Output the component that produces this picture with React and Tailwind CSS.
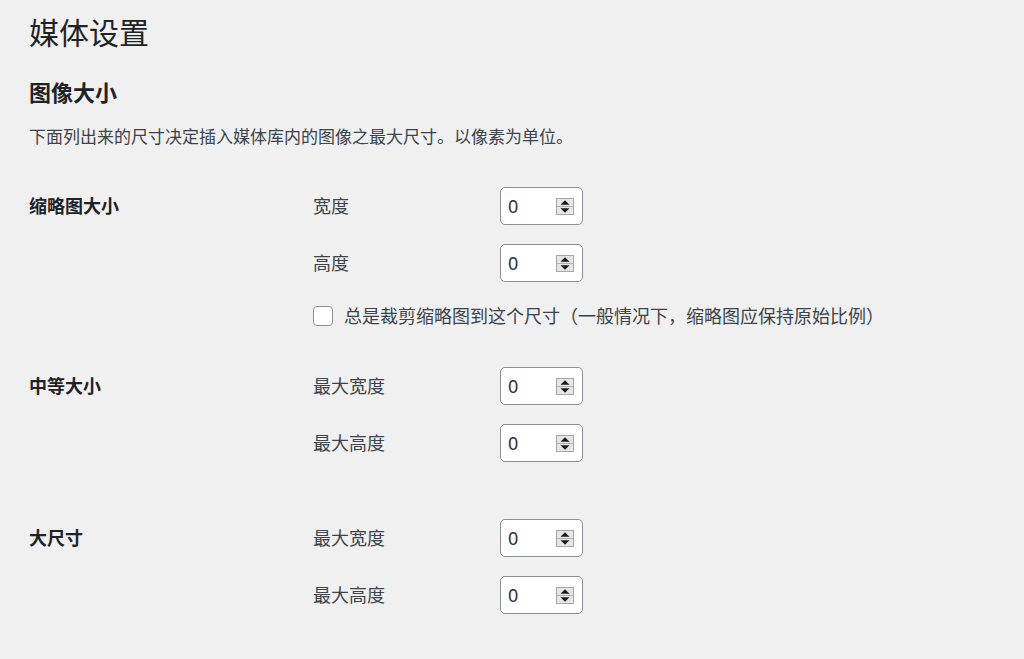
import React from "react";

const sections = [
  {
    title: "缩略图大小",
    rows: ["宽度", "高度"],
    crop: true,
    gap: "mt-0",
  },
  {
    title: "中等大小",
    rows: ["最大宽度", "最大高度"],
    gap: "mt-[41px]",
  },
  {
    title: "大尺寸",
    rows: ["最大宽度", "最大高度"],
    gap: "mt-[57px]",
  },
];

function Spinner() {
  return (
    <svg width="18" height="17" viewBox="0 0 18 17" className="shrink-0">
      <rect x="0.5" y="0.5" width="17" height="16" fill="#e6e6e6" stroke="#a6a6a6" />
      <line x1="1" y1="8.5" x2="17" y2="8.5" stroke="#b0b0b0" />
      <polygon points="9,2.3 13.5,6.8 4.5,6.8" fill="#1a1a1a" />
      <polygon points="4.5,10.2 13.5,10.2 9,14.7" fill="#1a1a1a" />
    </svg>
  );
}

function NumberBox() {
  return (
    <div className="flex h-[38px] w-[83px] items-center justify-between rounded-[5px] border border-[#8c8f94] bg-white pl-[7px] pr-[8px]">
      <span className="text-[18px] leading-none text-[#2c3338]">0</span>
      <Spinner />
    </div>
  );
}

export default function App() {
  return (
    <div className="min-h-screen bg-[#f0f0f1] pl-[29px] pt-[13px] font-['Noto_Sans','Noto_Sans_CJK_SC',sans-serif]">
      <h1 className="text-[30px] leading-[40px] font-normal text-[#1d2327]">媒体设置</h1>

      <h2 className="mt-[24px] text-[22px] leading-[30px] font-bold text-[#1d2327]">图像大小</h2>

      <p className="mt-[17px] text-[17px] leading-[26px] text-[#3c434a]">
        下面列出来的尺寸决定插入媒体库内的图像之最大尺寸。以像素为单位。
      </p>

      <div className="mt-[37px]">
        {sections.map((s) => (
          <div key={s.title} className={`flex ${s.gap}`}>
            <div className="flex h-[38px] w-[284px] shrink-0 items-center text-[18px] font-bold text-[#1d2327]">
              {s.title}
            </div>
            <div className="flex flex-col">
              <div className="flex flex-col gap-[19px]">
                {s.rows.map((label) => (
                  <div key={label} className="flex h-[38px] items-center">
                    <span className="w-[187px] text-[18px] text-[#3c434a]">{label}</span>
                    <NumberBox />
                  </div>
                ))}
              </div>
              {s.crop && (
                <label className="mt-[24px] flex h-[20px] items-center gap-[11px] text-[18px] leading-[20px] text-[#3c434a]">
                  <span className="h-[20px] w-[20px] shrink-0 rounded-[4px] border border-[#8c8f94] bg-white" />
                  总是裁剪缩略图到这个尺寸（一般情况下，缩略图应保持原始比例）
                </label>
              )}
            </div>
          </div>
        ))}
      </div>
    </div>
  );
}
